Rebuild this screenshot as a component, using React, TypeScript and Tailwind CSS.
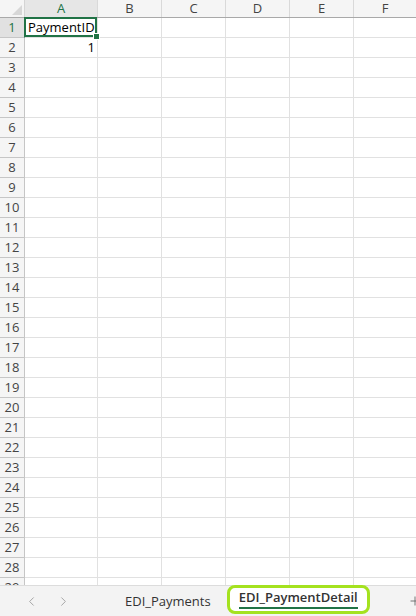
import React from "react";
import { ChevronLeft, ChevronRight, Plus } from "lucide-react";

const cols = ["A", "B", "C", "D", "E", "F"];
const widths = ["w-[73px]", "w-[64px]", "w-[64px]", "w-[64px]", "w-[64px]", "w-[63px]"];
const rows = Array.from({ length: 29 }, (_, i) => i + 1);

function HeaderRow() {
  return (
    <div className="flex h-[18px] bg-[#f5f5f5] border-b border-[#a9a9a9] text-[13px] text-[#444]">
      <div className="relative w-[25px] shrink-0 border-r border-[#d4d4d4]">
        <svg className="absolute right-[2px] bottom-[2px]" width="10" height="10" viewBox="0 0 10 10">
          <polygon points="10,0 10,10 0,10" fill="#d7d7d7" />
        </svg>
      </div>
      {cols.map((c, i) => (
        <div
          key={c}
          className={`${widths[i]} shrink-0 flex items-center justify-center border-r border-[#d9d9d9] ${
            i === 0 ? "bg-[#e6e6e6] text-[#217346]" : ""
          }`}
        >
          {c}
        </div>
      ))}
    </div>
  );
}

function Row({ n }: { n: number }) {
  return (
    <div className="flex h-[20px] shrink-0">
      <div
        className={`w-[25px] shrink-0 flex items-center justify-center border-r border-b border-[#c6c6c6] text-[13px] ${
          n === 1 ? "bg-[#e1e1e1] text-[#217346] border-r-[#217346]" : "bg-[#f5f5f5] text-[#444]"
        }`}
      >
        {n}
      </div>
      {cols.map((c, i) => (
        <div
          key={c}
          className={`${widths[i]} shrink-0 relative flex items-center border-r border-b border-[#e1e1e1] text-[13px] text-black`}
        >
          {n === 1 && i === 0 && (
            <>
              <span className="pl-[3px] leading-none">PaymentID</span>
              <div className="absolute -left-[1px] -top-[1px] right-0 bottom-0 border-2 border-[#217346]" />
              <div className="absolute z-10 -right-[3px] -bottom-[3px] w-[7px] h-[7px] bg-[#217346] border border-white" />
            </>
          )}
          {n === 2 && i === 0 && <span className="ml-auto pr-[2px] leading-none">1</span>}
        </div>
      ))}
    </div>
  );
}

export default function App() {
  return (
    <div
      className="w-[416px] h-[616px] overflow-hidden bg-white flex flex-col"
      style={{ fontFamily: '"Open Sans", "Liberation Sans", sans-serif' }}
    >
      <div className="h-[585px] overflow-hidden shrink-0 flex flex-col">
        <HeaderRow />
        {rows.map((n) => (
          <Row key={n} n={n} />
        ))}
      </div>
      <div className="flex-1 flex items-center bg-[#f3f3f3] border-t border-[#dcdcdc] text-[13px] text-[#333]">
        <div className="w-[15px] shrink-0" />
        <div className="w-[32px] flex justify-center text-[#a0a0a0]">
          <ChevronLeft size={15} strokeWidth={1.5} />
        </div>
        <div className="w-[32px] flex justify-center text-[#a0a0a0]">
          <ChevronRight size={15} strokeWidth={1.5} />
        </div>
        <div className="ml-[34px] px-[12px] leading-none">EDI_Payments</div>
        <div className="ml-[4px] h-[29px] self-start -mt-[1px] rounded-[8px] border-[3px] border-[#a4e21f] bg-white px-[9px] flex flex-col items-center justify-center">
          <span className="font-semibold leading-none mt-[1px]">EDI_PaymentDetail</span>
          <span className="mt-[3px] h-[2px] w-full bg-[#217346]" />
        </div>
        <div className="ml-auto -mr-[6px] text-[#666]">
          <Plus size={14} strokeWidth={1.5} />
        </div>
      </div>
    </div>
  );
}
